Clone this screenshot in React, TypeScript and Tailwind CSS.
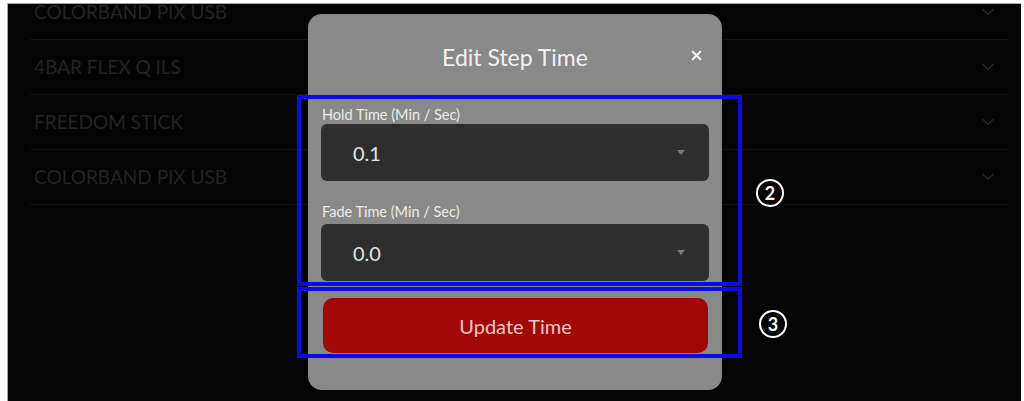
import React from 'react';
import { ChevronDown, X } from 'lucide-react';

const fixtures = ['COLORBAND PIX USB', '4BAR FLEX Q ILS', 'FREEDOM STICK', 'COLORBAND PIX USB'];

const TimeSelect: React.FC<{ label: string; value: string; first?: boolean }> = ({ label, value, first }) => (
  <div className={first ? 'mt-[6px]' : 'mt-[22px]'}>
    <div className="text-[14.5px] leading-[18px] text-[#ececec] pl-[1px]">{label}</div>
    <div className={`${first ? 'mt-[0px]' : 'mt-[3px]'} h-[57px] rounded-[6px] bg-[#2e2e2e] flex items-center justify-between pl-[32px] pr-[24px]`}>
      <span className="text-[20px] text-[#e2e2e2]">{value}</span>
      <span className="w-0 h-0 border-l-[4px] border-r-[4px] border-t-[5px] border-l-transparent border-r-transparent border-t-[#7a7a7a]" />
    </div>
  </div>
);

const Marker: React.FC<{ n: number }> = ({ n }) => (
  <div className="w-[28px] h-[28px] rounded-full border-[2.5px] border-white flex items-center justify-center text-[18px] font-bold text-white leading-none">
    {n}
  </div>
);

export default function App() {
  return (
    <div className="relative w-[1024px] h-[401px] bg-white overflow-hidden pt-[3px] pl-[7px] pr-[3px]" style={{ fontFamily: 'Lato, "Open Sans", sans-serif' }}>
      {/* background fixture list */}
      <div className="h-full bg-[#040404] border-t border-l border-[#a8a8a8] overflow-hidden">
        <div className="-mt-[19px] ml-[22px] mr-[12px]">
          {fixtures.map((name, i) => (
            <div key={i} className="h-[55px] flex items-center justify-between border-b border-[#121212] pl-[4px] pr-[11px]">
              <span className="text-[19px] text-[#232323]">{name}</span>
              <ChevronDown size={20} strokeWidth={1.6} className="text-[#2a2a2a]" />
            </div>
          ))}
        </div>
      </div>

      {/* modal */}
      <div className="absolute left-[308px] top-[14px] w-[414px] h-[376px] rounded-[14px] bg-[#898989] px-[13px]">
        <div className="relative h-[86px] flex items-center justify-center">
          <span className="text-[23px] text-[#f2f2f2]">Edit Step Time</span>
          <X size={15} strokeWidth={3.5} className="absolute right-[5px] top-[34px] text-[#f4f4f4]" />
        </div>
        <TimeSelect label="Hold Time (Min / Sec)" value="0.1" first />
        <TimeSelect label="Fade Time (Min / Sec)" value="0.0" />
        <button className="mt-[17px] mx-[2px] w-[385px] h-[55px] rounded-[10px] bg-[#a20808] text-[20px] text-[#f2c4c4]">
          Update Time
        </button>
      </div>

      {/* annotations */}
      <div className="absolute left-[297px] top-[95px] w-[445px] h-[191px] border-4 border-[#0b0be4]" />
      <div className="absolute left-[297px] top-[287px] w-[445px] h-[71px] border-4 border-[#0b0be4]" />
      <div className="absolute left-[756px] top-[179px]"><Marker n={2} /></div>
      <div className="absolute left-[759px] top-[310px]"><Marker n={3} /></div>
    </div>
  );
}
